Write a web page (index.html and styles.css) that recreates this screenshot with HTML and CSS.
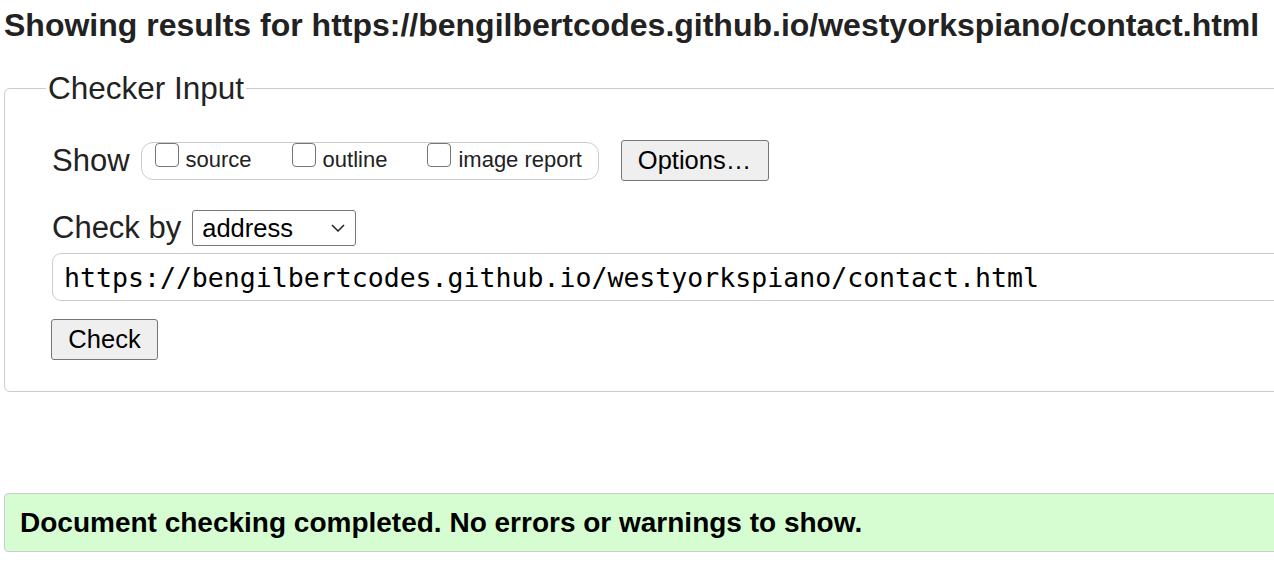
FILE: index.html
```html
<!DOCTYPE html>
<html lang="en">
<head>
<meta charset="utf-8">
<title>Showing results for contact.html - Nu Html Checker</title>
<link rel="stylesheet" href="styles.css">
</head>
<body>
<h2 class="title">Showing results for https://bengilbertcodes.github.io/westyorkspiano/contact.html</h2>
<form class="checker">
  <fieldset class="fs">
    <legend class="legend">Checker Input</legend>
    <div class="row row-show">
      <span class="row-label">Show</span>
      <div class="opts">
        <label class="opt"><input type="checkbox" class="cb"><span>source</span></label>
        <label class="opt"><input type="checkbox" class="cb"><span>outline</span></label>
        <label class="opt"><input type="checkbox" class="cb"><span>image report</span></label>
      </div>
      <button type="button" class="btn btn-options">Options…</button>
    </div>
    <div class="row row-by">
      <span class="row-label">Check by</span>
      <div class="select">
        <span class="select-text">address</span>
        <svg class="chev" width="14" height="8" viewBox="0 0 14 8"><path d="M1 1 L7 7 L13 1" fill="none" stroke="#222" stroke-width="1.5"/></svg>
      </div>
    </div>
    <div class="row row-url">
      <div class="url">https://bengilbertcodes.github.io/westyorkspiano/contact.html</div>
    </div>
    <div class="row row-check">
      <button type="button" class="btn btn-check">Check</button>
    </div>
  </fieldset>
</form>
<div class="result">Document checking completed. No errors or warnings to show.</div>
</body>
</html>
```
FILE: styles.css
```css
html {
  overflow: hidden;
}
body {
  margin: 0;
  padding: 0 4px;
  font-family: "Liberation Sans", Arial, sans-serif;
  color: #222;
  background: #fff;
  width: 1320px;
}
.title {
  margin: 8px 0 0;
  font-size: 32px;
  font-weight: bold;
  line-height: 34px;
  white-space: nowrap;
}
.checker {
  margin: 0;
}
.fs {
  margin: 28px 0 0;
  border: 1px solid #ccc;
  border-radius: 6px;
  padding: 0 0 31px 47px;
}
.legend {
  margin-left: -6px;
  padding: 0 2px;
  font-size: 31.5px;
  line-height: 36px;
}
.row {
  display: flex;
  align-items: center;
}
.row-label {
  font-size: 31px;
  line-height: 36px;
}
.row-show {
  margin-top: 34px;
  height: 41px;
}
.opts {
  flex-shrink: 0;
  margin-left: 11px;
  height: 36px;
  border: 1px solid #ccc;
  border-radius: 12px;
  display: flex;
  align-items: flex-start;
  padding: 0 12px 0 13px;
  width: 431px;
  box-sizing: content-box;
  white-space: nowrap;
}
.opt {
  display: flex;
  align-items: flex-start;
  flex-shrink: 0;
  font-size: 22px;
  line-height: 26px;
  margin-right: 40px;
}
.opt:last-child {
  margin-right: 0;
}
.opt span {
  margin-left: 7px;
  margin-top: 4px;
  white-space: nowrap;
}
.cb {
  appearance: none;
  -webkit-appearance: none;
  margin: 0;
  width: 24px;
  height: 24px;
  border: 1.5px solid #767676;
  border-radius: 4px;
  background: #fff;
}
.btn {
  font-family: "Liberation Sans", Arial, sans-serif;
  font-size: 25.5px;
  color: #000;
  background: #efefef;
  border: 1px solid #767676;
  border-radius: 3px;
  height: 41px;
  padding: 0 15px;
}
.btn-options {
  flex-shrink: 0;
  margin-left: 22px;
  width: 148px;
}
.row-by {
  margin-top: 29px;
  height: 36px;
}
.select {
  margin-left: 11px;
  width: 164px;
  height: 36px;
  box-sizing: border-box;
  border: 1px solid #767676;
  border-radius: 3px;
  display: flex;
  align-items: center;
  justify-content: space-between;
  padding: 0 10px 0 9px;
  font-size: 25.5px;
  color: #000;
}
.row-url {
  margin-top: 7px;
}
.url {
  width: 100%;
  height: 48px;
  box-sizing: border-box;
  border: 1px solid #ccc;
  border-radius: 9px;
  padding: 0 11px;
  display: flex;
  align-items: center;
  font-family: "DejaVu Sans Mono", monospace;
  font-size: 26.55px;
  color: #000;
}
.row-check {
  margin-top: 18px;
}
.btn-check {
  margin-left: -1px;
  width: 107px;
  padding: 0;
}
.result {
  margin-top: 101px;
  height: 59px;
  box-sizing: border-box;
  border: 1px solid #ccc;
  border-radius: 4px;
  background: #d6fdd1;
  padding: 0 15px;
  display: flex;
  align-items: center;
  font-size: 28px;
  font-weight: bold;
  color: #000;
}
```
